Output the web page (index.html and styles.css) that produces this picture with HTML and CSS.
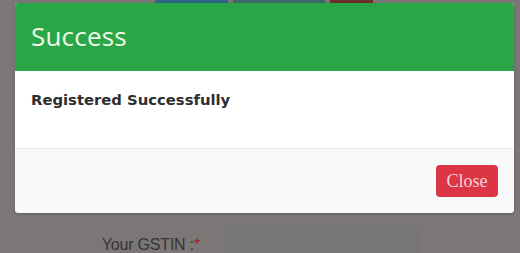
FILE: index.html
```html
<!DOCTYPE html>
<html>
<head>
<meta charset="utf-8">
<link rel="stylesheet" href="styles.css">
</head>
<body>
<div class="page">
  <div class="toolbar">
    <span class="tb tb-blue"></span>
    <span class="tb tb-teal"></span>
    <span class="tb tb-red"></span>
  </div>
  <div class="form-row">
    <label class="label">Your GSTIN :<span class="req">*</span></label>
    <div class="input"></div>
  </div>
</div>
<div class="modal">
  <div class="modal-header">
    <h2 class="modal-title">Success</h2>
  </div>
  <div class="modal-body">
    <p class="message">Registered Successfully</p>
  </div>
  <div class="modal-footer">
    <button class="btn-close">Close</button>
  </div>
</div>
</body>
</html>
```
FILE: styles.css
```css
html, body {
  margin: 0;
  padding: 0;
}
body {
  width: 520px;
  height: 253px;
  overflow: hidden;
  background: #7a7776;
  font-family: "Liberation Sans", Arial, sans-serif;
}
.page {
  display: flex;
  flex-direction: column;
}
.toolbar {
  display: flex;
  height: 3px;
  padding-left: 155px;
  gap: 5px;
}
.tb {
  display: block;
  height: 3px;
}
.tb-blue { width: 73px; background: #2a6684; }
.tb-teal { width: 92px; background: #3d6a68; }
.tb-red { width: 43px; background: #6a302d; }
.form-row {
  display: flex;
  align-items: flex-start;
  margin-top: 224px;
}
.label {
  width: 200px;
  text-align: right;
  font-size: 16px;
  color: #353434;
  padding-top: 9px;
  letter-spacing: -0.2px;
}
.req {
  color: #a8221f;
}
.input {
  margin-left: 25px;
  width: 191px;
  height: 36px;
  border: 1px solid #727273;
  border-radius: 3px;
  background: #767677;
}
.modal {
  position: fixed;
  left: 15px;
  top: 3px;
  width: 499px;
  height: 210px;
  background: #fff;
  border-radius: 4px;
  overflow: hidden;
  display: flex;
  flex-direction: column;
  box-shadow: 0 1px 3px rgba(0,0,0,0.2);
}
.modal-header {
  height: 68px;
  background: #29a746;
  display: flex;
  align-items: center;
  padding-left: 16px;
}
.modal-title {
  margin: 0;
  font-family: "Open Sans", sans-serif;
  font-weight: 400;
  font-size: 26px;
  color: #eef7e8;
  letter-spacing: 0.2px;
  padding-bottom: 2px;
}
.modal-body {
  height: 77px;
  padding: 0 16px;
  background: #fff;
}
.message {
  margin: 20px 0 0;
  font-family: "DejaVu Sans", Verdana, sans-serif;
  font-weight: bold;
  font-size: 14.8px;
  color: #2e2e2e;
}
.modal-footer {
  flex: 1;
  border-top: 1px solid #e6e7e8;
  background: #f8f9fa;
  display: flex;
  justify-content: flex-end;
  align-items: flex-start;
  padding: 16px 16px 0 0;
}
.btn-close {
  width: 62px;
  height: 32px;
  border: none;
  border-radius: 4px;
  background: #dc3545;
  color: #f4d3d7;
  font-family: "Liberation Serif", "Times New Roman", serif;
  font-size: 18px;
  padding: 0;
}
```
